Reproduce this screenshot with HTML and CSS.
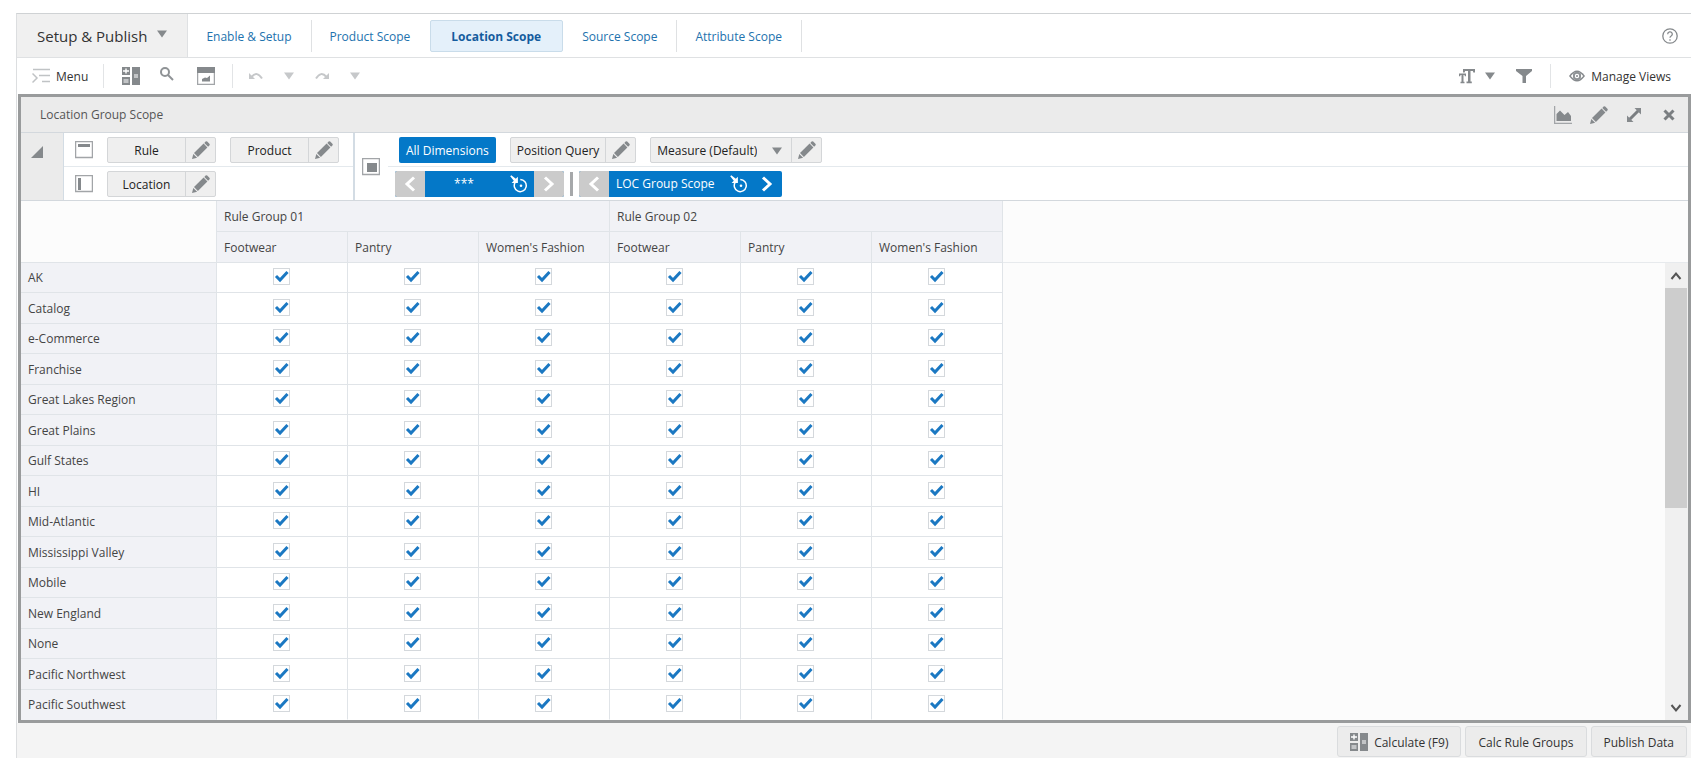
FILE: index.html
```html
<!DOCTYPE html>
<html lang="en">
<head>
<meta charset="utf-8">
<title>Setup &amp; Publish</title>
<link rel="stylesheet" href="styles.css">
</head>
<body>
<svg class="sprite" aria-hidden="true">
  <symbol id="pencil" viewBox="0 0 18 18"><path d="M0 18 1.300 12.900 5.100 16.700ZM2 12 11.600 2.600 15.400 6.400 5.900 15.900ZM12.300 1.900 13.600.6q.8-.8 1.600 0l2.200 2.200q.8.8 0 1.600l-1.300 1.300Z"/></symbol>
  <symbol id="caret" viewBox="0 0 10 8"><path d="M0 0.500H10L5 7.500Z"/></symbol>
  <symbol id="calc" viewBox="0 0 18 18"><path d="M0 0h8v8H0zM0 10h8v8H0zM10 0h8v18h-8z"/><path class="cut" d="M3.300 1.500h1.400v1.800H7v1.400H4.700V6.500H3.300V4.700H1V3.300h2.300zM1.500 12.500h5v1h-5zM1.500 14.500h5v1h-5zM12 7.500h4v1h-4zM12 9.500h4v1h-4z"/></symbol>
  <symbol id="left" viewBox="0 0 12 16"><path d="M10 1.500 3 8l7 6.500"/></symbol>
  <symbol id="right" viewBox="0 0 12 16"><path d="M2 1.500 9 8l-7 6.500"/></symbol>
  <symbol id="target" viewBox="0 0 18 18"><path class="ring" d="M5.300 7.200a6 6 0 1 0 5-2.600"/><circle cx="11" cy="10.700" r="1.300"/><path d="M1.300.2 5.800 3.800 7.900 1.700V8H1.600L3.800 5.800.2 1.300Z"/></symbol>
</svg>

<div class="app">
  <header class="topbar">
    <button class="task" type="button">Setup &amp; Publish <svg class="caret"><use href="#caret"/></svg></button>
    <nav class="tabs">
      <a class="tab" href="#enable">Enable &amp; Setup</a>
      <a class="tab no-rule" href="#product">Product Scope</a>
      <a class="tab current" href="#location" aria-current="page">Location Scope</a>
      <a class="tab" href="#source">Source Scope</a>
      <a class="tab" href="#attribute">Attribute Scope</a>
    </nav>
    <button class="help" type="button" aria-label="Help"><svg viewBox="0 0 16 16"><circle cx="8" cy="8" r="7.200"/><path d="M5.700 6.200a2.300 2.200 0 1 1 3.500 1.800Q8 8.700 8 9.800M8 11.300v1.500"/></svg></button>
  </header>

  <div class="toolbar">
    <button class="tool menu" type="button"><svg class="i18" viewBox="0 0 18 16"><path class="thin" d="M0.500 5.500 5 10 0.500 14.500M1 1.500H18M7 7.500H18M10 13.500H18"/></svg><span>Menu</span></button>
    <div class="group icons">
      <button class="tool" type="button" aria-label="Calculate"><svg class="i18"><use href="#calc"/></svg></button>
      <button class="tool find" type="button" aria-label="Find"><svg class="i14" viewBox="0 0 14 14"><circle class="line" cx="5" cy="5" r="4"/><path class="line" d="M8 8 13 13"/></svg></button>
      <button class="tool" type="button" aria-label="Dashboard"><svg class="i18" viewBox="0 0 18 18"><path d="M0 0h18v6H0z"/><path class="thin" d="M.5 6v11.500h17V6"/><path d="M5 14.500V12l3-1.500L10 11l3-2.500v6z"/></svg></button>
    </div>
    <div class="group history">
      <button class="tool" type="button" aria-label="Undo"><svg class="i14" viewBox="0 0 14 8"><path d="M0 1v6h6z"/><path class="line" d="M2.500 5Q8-1.500 13 6.500"/></svg></button>
      <button class="tool" type="button" aria-label="Undo list"><svg class="caret"><use href="#caret"/></svg></button>
      <button class="tool" type="button" aria-label="Redo"><svg class="i14" viewBox="0 0 14 8"><path d="M14 1v6H8z"/><path class="line" d="M11.500 5Q6-1.500 1 6.500"/></svg></button>
      <button class="tool" type="button" aria-label="Redo list"><svg class="caret"><use href="#caret"/></svg></button>
    </div>
    <div class="view-tools">
      <button class="tool format" type="button" aria-label="Text format"><svg class="i16" viewBox="0 0 16 16"><path d="M4 1h12v3.500h-1.700l-.4-1.500H11.500V13.500h1.300v1.700H7.500v-1.700H9V3H6.100l-.4 1.500H4zM0 5.500h7V8.300H5.800l-.3-1.200H4.500V13.700h1v1.500H1.500v-1.500h1V7.100H1.500L1.200 8.300H0z"/></svg><svg class="caret"><use href="#caret"/></svg></button>
      <button class="tool filter" type="button" aria-label="Filter"><svg class="i16" viewBox="0 0 16 16"><path d="M0 1h16v2L10 8v7H6.500V8L0 3z"/></svg></button>
      <button class="tool manage" type="button"><svg class="i16" viewBox="0 0 16 12"><path d="M0 6Q8-5 16 6 8 17 0 6Z"/><circle class="cut" cx="8" cy="6" r="4"/><circle class="line" cx="8" cy="6" r="3.200"/><circle cx="8" cy="6" r="1"/><path class="cut" d="M1.800 6 4 3.800v4.400zM14.200 6 12 3.800v4.400z"/></svg><span>Manage Views</span></button>
    </div>
  </div>

  <main class="panel">
    <div class="titlebar">
      <h1>Location Group Scope</h1>
      <button type="button" aria-label="Chart"><svg class="i18" viewBox="0 0 18 18"><path class="thin" d="M.500 0v17.500H18"/><path d="M2.500 15V8L6 4.500 10.500 9 14 6l3 4v5z"/></svg></button>
      <button type="button" aria-label="Edit"><svg class="i18"><use href="#pencil"/></svg></button>
      <button type="button" aria-label="Maximize"><svg class="i16" viewBox="0 0 16 16"><path class="bold" d="M3.500 12.500 12.500 3.500"/><path d="M8.500 1H15v6.500zM1 8.500V15h6.500z"/></svg></button>
      <button type="button" aria-label="Close"><svg class="i12" viewBox="0 0 12 12"><path class="bold" d="M1.500 1.500 10.500 10.500M10.500 1.500 1.500 10.500"/></svg></button>
    </div>

    <div class="axes">
      <button class="collapse" type="button" aria-label="Collapse"><svg class="i12" viewBox="0 0 12 12"><path d="M12 0V12H0Z"/></svg></button>
      <div class="axis-pair">
        <div class="axis">
          <svg class="i18" viewBox="0 0 18 18"><path class="thin" d="M.5.5h17v16H.5z"/><path d="M3 3h12v3H3z"/></svg>
          <div class="chip"><button class="name wide" type="button">Rule</button><button class="edit" type="button" aria-label="Edit rule"><svg class="i18"><use href="#pencil"/></svg></button></div>
          <div class="chip"><button class="name wide" type="button">Product</button><button class="edit" type="button" aria-label="Edit product"><svg class="i18"><use href="#pencil"/></svg></button></div>
        </div>
        <div class="axis">
          <svg class="i18" viewBox="0 0 18 18"><path class="thin" d="M.5.5h17v16H.5z"/><path d="M3 3h3v12H3z"/></svg>
          <div class="chip"><button class="name wide" type="button">Location</button><button class="edit" type="button" aria-label="Edit location"><svg class="i18"><use href="#pencil"/></svg></button></div>
        </div>
      </div>
      <div class="slice-icon"><svg class="i18" viewBox="0 0 18 18"><path class="thin" d="M.5.5h17v16H.5z"/><path d="M5 5h10v9H5z"/></svg></div>
      <div class="slices">
        <div class="axis dims">
          <button class="all" type="button">All Dimensions</button>
          <div class="chip"><button class="name" type="button">Position Query</button><button class="edit" type="button" aria-label="Edit position query"><svg class="i18"><use href="#pencil"/></svg></button></div>
          <div class="chip"><label class="name measure"><select aria-label="Measure profile"><option>Measure (Default)</option></select><svg class="caret"><use href="#caret"/></svg></label><button class="edit" type="button" aria-label="Edit measure"><svg class="i18"><use href="#pencil"/></svg></button></div>
        </div>
        <div class="axis pager-row">
          <div class="pager">
            <button class="step off" type="button" aria-label="Previous"><svg><use href="#left"/></svg></button>
            <button class="slice stars" type="button"><span>***</span><svg class="i18"><use href="#target"/></svg></button>
            <button class="step off" type="button" aria-label="Next"><svg><use href="#right"/></svg></button>
          </div>
          <i class="bar"></i>
          <div class="pager">
            <button class="step off" type="button" aria-label="Previous measure"><svg><use href="#left"/></svg></button>
            <button class="slice" type="button"><span>LOC Group Scope</span><svg class="i18"><use href="#target"/></svg></button>
            <button class="step" type="button" aria-label="Next measure"><svg><use href="#right"/></svg></button>
          </div>
        </div>
      </div>
    </div>

    <div class="grid-area">
      <table class="grid">
        <colgroup><col class="c-name"><col span="6" class="c-val"></colgroup>
        <thead>
          <tr><td rowspan="2" class="corner"></td><th colspan="3">Rule Group 01</th><th colspan="3">Rule Group 02</th></tr>
          <tr><th>Footwear</th><th>Pantry</th><th>Women's Fashion</th><th>Footwear</th><th>Pantry</th><th>Women's Fashion</th></tr>
        </thead>
        <tbody id="rows"></tbody>
      </table>
      <div class="rest">
        <div class="rest-head"></div>
        <div class="scroll">
          <button type="button" aria-label="Scroll up"><svg viewBox="0 0 12 10"><path d="M1.500 8 6 2.500 10.500 8"/></svg></button>
          <div class="track"><div class="thumb"></div></div>
          <button type="button" aria-label="Scroll down"><svg viewBox="0 0 12 10"><path d="M1.500 2 6 7.500 10.500 2"/></svg></button>
        </div>
      </div>
    </div>
  </main>

  <footer class="actions">
    <button type="button"><svg class="i18"><use href="#calc"/></svg><span>Calculate (F9)</span></button>
    <button type="button"><span>Calc Rule Groups</span></button>
    <button type="button"><span>Publish Data</span></button>
  </footer>
</div>
<script src="app.js"></script>
</body>
</html>
```

FILE: styles.css
```css
* { box-sizing: border-box; }

body {
  margin: 0;
  padding: 13px 13px 11px 16px;
  min-height: 100vh;
  display: flex;
  background: #fff;
  color: #333;
  font: 12px/16px "Open Sans", "Noto Sans", sans-serif;
}

button, select, input {
  margin: 0;
  padding: 0;
  border: 0;
  border-radius: 0;
  background: none;
  color: inherit;
  font: inherit;
}

svg { display: block; flex: none; fill: #85898c; }
.sprite { position: absolute; width: 0; height: 0; }
.i18 { width: 18px; height: 18px; }
.i16 { width: 16px; height: 16px; }
.i14 { width: 14px; height: 14px; }
.i12 { width: 12px; height: 12px; }
.caret { width: 10px; height: 8px; }
.thin { fill: none; stroke: #a2a5a8; stroke-width: 1.500; }
.line { fill: none; stroke: #8f9396; stroke-width: 2; }
.bold { fill: none; stroke: #7a7e81; stroke-width: 3; }
.cut { fill: #fff; }
.ring { fill: none; stroke: #fff; stroke-width: 1.500; }

.app {
  flex: 1;
  min-width: 0;
  display: flex;
  flex-direction: column;
  border-top: 1px solid #cfd2d4;
  border-left: 1px solid #dcdee0;
}

/* top bar */
.topbar { display: flex; height: 44px; border-bottom: 1px solid #dfe1e3; }
.task {
  display: flex;
  align-items: center;
  gap: 10px;
  padding: 0 20px;
  border-right: 1px solid #dfe1e3;
  background: #f0f0f0;
  font-size: 15px;
}
.task svg { margin-bottom: 3px; }
.tabs { flex: 1; display: flex; align-items: center; }
.tab {
  display: flex;
  align-items: center;
  height: 32px;
  padding: 2px 19px 0 18px;
  border-right: 1px solid #dfe1e3;
  color: #2272ae;
  text-decoration: none;
}
.tab.no-rule { border-color: transparent; }
.tab.current {
  padding: 2px 21px 0 20px;
  margin-right: 1px;
  border: 1px solid #c9dcea;
  border-radius: 2px;
  background: #e4f0fa;
  color: #145c9e;
  font-weight: 700;
}
.help { padding: 0 13px; }
.help svg { width: 16px; height: 16px; fill: none; stroke: #85898c; stroke-width: 1.300; }

/* toolbar */
.toolbar { display: flex; align-items: center; height: 36px; }
.tool { display: flex; align-items: center; }
.tool span { padding-top: 2px; }
.menu { gap: 6px; padding: 0 15px; }
.menu .thin { stroke: #c0c3c5; }
.group { display: flex; align-items: center; height: 24px; border-left: 1px solid #e2e4e6; }
.icons { gap: 20px; padding: 0 17px 0 18px; }
.find { padding: 0 3px 4px 0; }
.history { gap: 21px; padding: 0 16px; }
.history svg { fill: #c6c8ca; }
.history .line { stroke: #c6c8ca; }
.view-tools { display: flex; align-items: center; margin-left: auto; padding-right: 20px; }
.format { gap: 10px; }
.filter { padding: 0 18px 0 21px; }
.manage { gap: 6px; height: 24px; padding-left: 18px; border-left: 1px solid #e2e4e6; }
.manage svg { height: 12px; }

/* panel */
.panel {
  flex: 1;
  display: flex;
  flex-direction: column;
  margin-left: 1px;
  border: 3px solid #999b9c;
}
.titlebar {
  display: flex;
  align-items: center;
  gap: 18px;
  height: 36px;
  padding: 0 13px 0 19px;
  border-bottom: 1px solid #d3d8dd;
  background: #ebebeb;
}
.titlebar h1 { flex: 1; margin: 0; font-size: 12px; font-weight: 400; color: #555; }
.titlebar button:last-child { padding-left: 3px; }

.axes { display: flex; border-bottom: 1px solid #d3d8dd; }
.collapse {
  display: flex;
  align-items: flex-start;
  width: 43px;
  padding: 13px 10px;
  border-right: 1px solid #d3dce4;
  background: #ebebeb;
}
.axis { display: flex; align-items: center; height: 33px; gap: 14px; padding-left: 11px; }
.axis:last-child { border-top: 1px solid #e4e9ed; height: 34px; }
.axis-pair { width: 291px; border-right: 2px solid #d3dce4; }
.slice-icon { display: flex; align-items: center; padding: 0 8px 0 7px; }
.slices { flex: 1; }
.chip {
  display: flex;
  height: 26px;
  border: 1px solid #d4d6d8;
  border-radius: 2px;
  background: #efefef;
}
.name { padding: 2px 6px 0; text-align: center; color: #222; }
.wide { width: 77px; }
.edit {
  display: flex;
  align-items: center;
  justify-content: center;
  width: 30px;
  border-left: 1px solid #d4d6d8;
}
.measure { display: flex; align-items: center; gap: 15px; padding-right: 9px; }
.measure select { appearance: none; }
.all {
  height: 26px;
  padding: 2px 7px 0;
  border-radius: 2px;
  background: #0478c8;
  color: #fff;
}
.pager-row { gap: 6px; padding-left: 7px; }
.pager { display: flex; height: 26px; border-radius: 2px; overflow: hidden; background: #0478c8; color: #fff; }
.pager svg { fill: #fff; }
.step { display: flex; align-items: center; justify-content: center; width: 30px; }
.step svg { width: 12px; height: 16px; fill: none; stroke: #fff; stroke-width: 3; }
.off { background: #cbcbcb; }
.slice { display: flex; align-items: center; gap: 15px; padding: 0 4px 0 7px; }
.slice span { padding-top: 1px; }
.stars { width: 109px; padding: 0 6px 0 8px; }
.stars span { flex: 1; }
.bar { width: 3px; height: 24px; background: #a6a8aa; }

/* grid */
.grid-area { flex: 1; display: flex; background: #fcfcfc; }
.grid { border-collapse: separate; border-spacing: 0; table-layout: fixed; width: 982px; }
.c-name { width: 196px; }
.c-val { width: 131px; }
.grid th, .grid td {
  height: 31px;
  padding: 1px 7px 0;
  border-right: 1px solid #e0e4e8;
  border-bottom: 1px solid #e0e4e8;
  font-weight: 400;
  text-align: left;
  color: #444;
}
.grid th { background: #f1f2f6; }
.grid tbody td { padding: 0 2px 2px 0; background: #fff; text-align: center; }
.grid tbody tr:nth-child(odd) > * { height: 30px; }
.grid tbody tr:last-child > * { border-bottom-color: transparent; }
.grid input {
  appearance: none;
  display: block;
  width: 17px;
  height: 17px;
  border: 1px solid #d4d8dc;
  background: #fff;
}
.cell { display: grid; justify-content: center; }
.cell > * { grid-area: 1 / 1; }
.cell svg { width: 17px; height: 17px; fill: none; stroke: #1b78c2; stroke-width: 3; pointer-events: none; }

.rest { flex: 1; display: flex; flex-direction: column; }
.rest-head { height: 62px; border-bottom: 1px solid #e7eaed; }
.scroll { flex: 1; display: flex; flex-direction: column; width: 23px; margin-left: auto; padding-right: 1px; background: #f0f0f0; }
.scroll button { display: flex; align-items: center; justify-content: center; height: 25px; }
.scroll button svg { width: 12px; height: 10px; fill: none; stroke: #555; stroke-width: 2; }
.track { flex: 1; }
.thumb { height: 54%; background: #cdcdcd; }

/* footer */
.actions {
  display: flex;
  justify-content: flex-end;
  gap: 4px;
  padding: 3px 4px 1px;
  background: #f4f4f4;
}
.actions button {
  display: flex;
  align-items: center;
  gap: 6px;
  height: 31px;
  padding: 0 12px;
  border: 1px solid #dadcde;
  border-radius: 3px;
  background: #ececec;
}
.actions span { padding-top: 2px; }
```

FILE: app.js
```js
const locations = [
  "AK", "Catalog", "e-Commerce", "Franchise", "Great Lakes Region",
  "Great Plains", "Gulf States", "HI", "Mid-Atlantic", "Mississippi Valley",
  "Mobile", "New England", "None", "Pacific Northwest", "Pacific Southwest"
];
const columns = [
  "Rule Group 01 Footwear", "Rule Group 01 Pantry", "Rule Group 01 Women's Fashion",
  "Rule Group 02 Footwear", "Rule Group 02 Pantry", "Rule Group 02 Women's Fashion"
];
const tick = '<svg viewBox="0 0 17 17"><path d="M3 8 7 12 14.500 4"/></svg>';

document.getElementById("rows").innerHTML = locations.map(place =>
  `<tr><th scope="row">${place}</th>` + columns.map(column =>
    `<td><label class="cell"><input type="checkbox" checked aria-label="${place}, ${column}">${tick}</label></td>`
  ).join("") + "</tr>"
).join("");
```
